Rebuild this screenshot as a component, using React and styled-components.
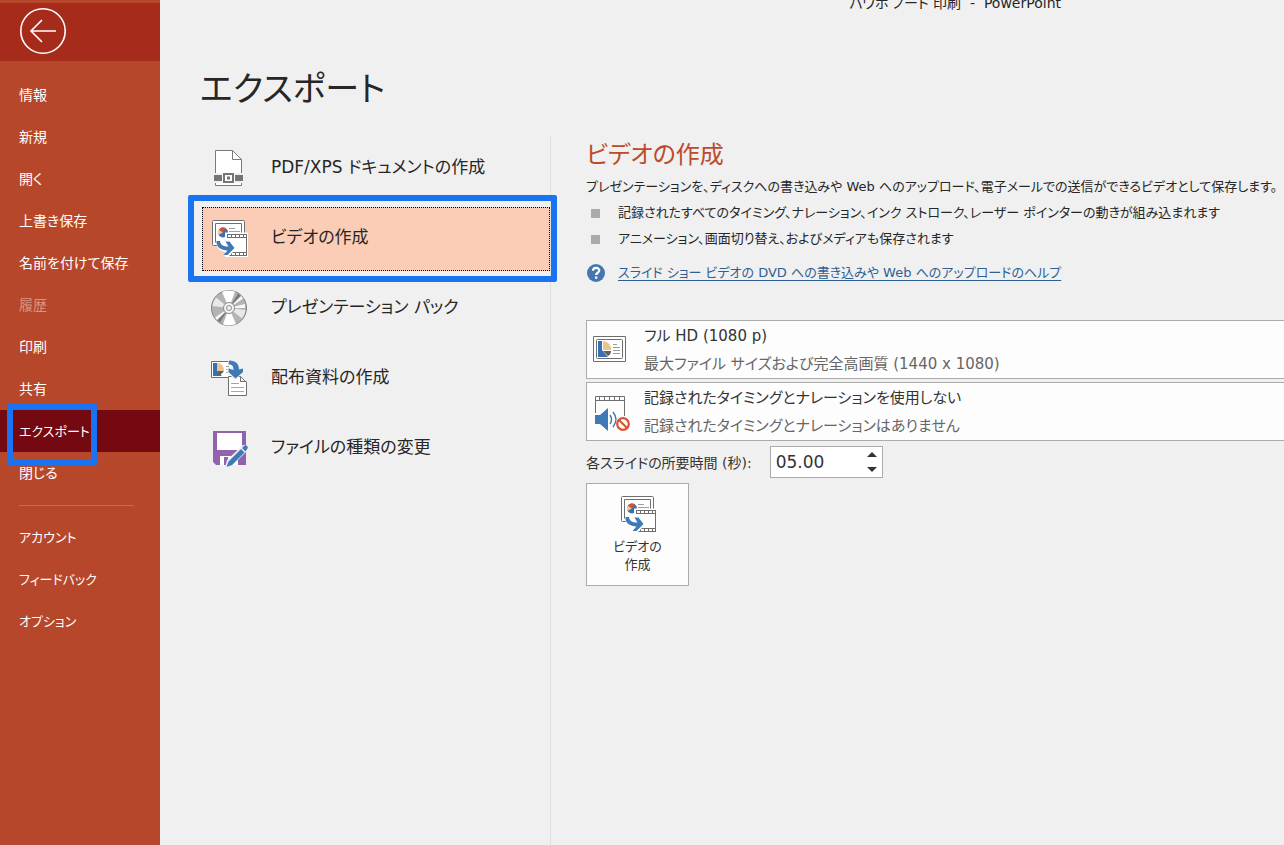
import * as React from 'react';
import styled, { createGlobalStyle } from 'styled-components';

const GlobalStyle = createGlobalStyle`
    * {
        box-sizing: border-box;
    }
    body {
        margin: 0;
        background: #f0f0f0;
        color: #262626;
        font-family: "DejaVu Sans", "Noto Sans CJK JP", sans-serif;
        font-size: 13px;
        font-feature-settings: "palt";
    }
    button, input {
        font: inherit;
        color: inherit;
        font-feature-settings: inherit;
    }
`

const menuItems = [
    { label: '情報' },
    { label: '新規' },
    { label: '開く' },
    { label: '上書き保存' },
    { label: '名前を付けて保存' },
    { label: '履歴', disabled: true },
    { label: '印刷' },
    { label: '共有' },
    { label: 'エクスポート', active: true, compact: true },
    { label: '閉じる' },
];

const footerItems = [
    { label: 'アカウント', compact: true },
    { label: 'フィードバック', compact: true },
    { label: 'オプション', compact: true },
];

const BackIcon = () => (
    <svg width="48" height="48" viewBox="0 0 48 48" fill="none" stroke="#fff" strokeWidth="1.6">
        <circle cx="24" cy="24" r="22.2" />
        <path d="M37 24H12M23 13L12 24l11 11" />
    </svg>
)

const PdfIcon = () => (
    <svg width="38" height="38" viewBox="0 0 38 38">
        <path d="M5.5.5h17l9 9v26h-26z" fill="#fff" stroke="#7a7a7a" />
        <path d="M22.5.5v9h9" fill="none" stroke="#7a7a7a" />
        <path d="M3 23h31v10H3z" fill="#f0f0f0" />
        <path d="M4 25h8v6H4zM25 25h8v6h-8z" fill="#757575" />
        <path d="M12 22h13v12H12z" fill="#fff" />
        <path d="M14 24h9v8h-9z" fill="none" stroke="#757575" strokeWidth="2" />
        <path d="M17 26.5h3v3h-3z" fill="#757575" />
    </svg>
)

const VideoIcon = () => (
    <svg width="38" height="38" viewBox="0 0 38 38">
        <rect x="2.5" y=".5" width="32" height="25" rx="1" fill="#fff" stroke="#6e6e6e" />
        <path d="M5.5 22.5v-19h26v12" fill="none" stroke="#6e6e6e" />
        <path d="M19 8.5h6M19 11.5h11" stroke="#a0a0a0" />
        <circle cx="13" cy="12.5" r="5" fill="#3a70ae" />
        <path d="M13 12.5L8.5 15A5 5 0 0 1 9 9.5z" fill="#f4c39b" />
        <path d="M13 12.5L9 9.5A5 5 0 0 1 16 8.5z" fill="#cf5335" />
        <path d="M15 12.5h23V37H15z" fill="#fff" />
        <path d="M17 14.5h19.5M17 17.5h19.5M17 32.5h19.5M17 35.5h19.5M17.5 14v4M36.5 14v22M17.5 32v4" stroke="#6e6e6e" />
        <path d="M19 16h17M19 34h17" stroke="#6e6e6e" strokeWidth="3" strokeDasharray="1 3" strokeDashoffset="-2" />
        <path d="M6 20h5c0 4 2 5 6 5l-1-4h5l6 7-8 8h-5l3-4C10 32 6 28 6 20z" fill="#fff" />
        <path d="M6.5 21H10c.5 4 3 5.5 8.5 5.5l-3-5h4l5 6.5-7 7h-4l4-4.5C11 30.5 6 27 6.5 21z" fill="#3f7ab8" />
    </svg>
)

const DiscIcon = () => (
    <svg width="38" height="38" viewBox="0 0 38 38">
        <circle cx="19" cy="18" r="17.5" fill="#b4b4b4" stroke="#808080" />
        <path d="M19 18L12 2a17 17 0 0 1 13-.2zM19 18L26 34a17 17 0 0 1-13 .2z" fill="#fff" />
        <path d="M19 18L2.5 16A17 17 0 0 1 6 7.5zM19 18l16.5 2A17 17 0 0 1 32 28.5z" fill="#e9e9e9" />
        <path d="M19 18L28 3.5l3 2.5zM19 18l-9 14.5L7 30z" fill="#7c7c7c" />
        <path d="M19 18L31 6l2 2.5zM19 18L7 30l-2-2.5zM19 18l16-4v4z" fill="#f8f8f8" />
        <circle cx="19" cy="18" r="5.5" fill="#f4f4f4" stroke="#8c8c8c" />
        <circle cx="19" cy="18" r="2.5" fill="#f0f0f0" stroke="#8c8c8c" />
    </svg>
)

const HandoutIcon = () => (
    <svg width="38" height="38" viewBox="0 0 38 38">
        <path d="M1.5 1.5h23v16h-23z" fill="#fff" stroke="#6e6e6e" />
        <path d="M3 3h4v8l5 5H3z" fill="#3a70ae" />
        <path d="M7 3a7 7 0 0 1 7 8H7z" fill="#ecc48b" />
        <path d="M7 11h7l-4 4.5z" fill="#5f5f5f" />
        <path d="M16 6.5h3M16 9.5h3M16 12.5h3" stroke="#9a9a9a" />
        <path d="M18.5 16.5h12l6 6v13h-18z" fill="#fff" stroke="#6e6e6e" />
        <path d="M30.5 16.5v5h6" fill="none" stroke="#6e6e6e" />
        <path d="M21 23.5h8M21 27.5h13M21 31.5h13" stroke="#a6a6a6" />
        <path d="M18 0h5c5 1 8 4 8 8h3v4l-9 8-8-8V7h5c0-2-1-3-4-3z" fill="#f0f0f0" />
        <path d="M19 .5c7 0 10 3.5 10 9l4-1V12l-7.500 6.500-7-6.500V8.500l5 1.500c0-4-1-5.500-5-5.500z" fill="#3f7ab8" />
    </svg>
)

const SaveAsIcon = () => (
    <svg width="38" height="38" viewBox="0 0 38 38">
        <path d="M3 1h33v34H6l-3-3z" fill="#9163ae" />
        <path d="M7 3h25v17H7z" fill="#fff" />
        <path d="M10 26h18v9H10z" fill="#fff" />
        <path d="M14 27h4v8h-4z" fill="#9163ae" />
        <path d="M15 38l2-8 16-15h5v5L22 36z" fill="#f0f0f0" />
        <path d="M16.5 37l2-5.5L31 19l3.5 3.5L22 35zM32 18l2.5-2.5c2-1 4 1 3 3L35.5 21.5z" fill="#3f7ab8" />
    </svg>
)

const SlideIcon = () => (
    <svg width="38" height="38" viewBox="0 0 38 38">
        <path d="M1.5 5.5h32v25h-32z" fill="#fff" stroke="#6e6e6e" />
        <rect x="4.5" y="8.5" width="26" height="19" rx="1" fill="#fff" stroke="#6e6e6e" />
        <path d="M6 10h4v9l6 7H6z" fill="#3a70ae" />
        <path d="M11 10a8 8 0 0 1 8 9h-8z" fill="#ecc48b" />
        <path d="M11 20h8c0 2-1 4-3 5z" fill="#5f5f5f" />
        <path d="M21 13.5h4M21 16.5h7M21 19.5h7M21 22.5h7" stroke="#9a9a9a" />
    </svg>
)

const MutedFilmIcon = () => (
    <svg width="38" height="38" viewBox="0 0 38 38">
        <path d="M3.5 20V3.5h29V23M3.5 7.5h29" fill="none" stroke="#6e6e6e" />
        <path d="M7 5.5h24" stroke="#6e6e6e" strokeWidth="4" strokeDasharray="1 4" />
        <path d="M3 22h5l8-7v23l-8-7H3z" fill="#3f7ab8" />
        <path d="M18 22c2 3 2 6 0 9M21 19c4 5 4 10 0 15" fill="none" stroke="#3f7ab8" strokeWidth="1.5" />
        <circle cx="31" cy="31" r="5.8" fill="#fff" stroke="#d65532" strokeWidth="2.2" />
        <path d="M27 27l8 8" stroke="#d65532" strokeWidth="2.2" />
    </svg>
)

const HelpIcon = () => (
    <svg width="20" height="20" viewBox="0 0 20 20">
        <circle cx="10" cy="10" r="9" fill="#4576b0" />
        <path d="M7 7.8C7 4 13.3 4 13.3 7.5c0 2.2-3.2 2.3-3.2 4.5" fill="none" stroke="#fff" strokeWidth="2.2" />
        <path d="M9 13.5h2.3v2.3H9z" fill="#fff" />
    </svg>
)

const exportItems = [
    { label: 'PDF/XPS ドキュメントの作成', icon: <PdfIcon /> },
    { label: 'ビデオの作成', icon: <VideoIcon />, selected: true },
    { label: 'プレゼンテーション パック', icon: <DiscIcon /> },
    { label: '配布資料の作成', icon: <HandoutIcon /> },
    { label: 'ファイルの種類の変更', icon: <SaveAsIcon /> },
];

const settings = [
    {
        title: 'フル HD (1080 p)',
        note: '最大ファイル サイズおよび完全高画質 (1440 x 1080)',
        icon: <SlideIcon />,
    },
    {
        title: '記録されたタイミングとナレーションを使用しない',
        note: '記録されたタイミングとナレーションはありません',
        icon: <MutedFilmIcon />,
    },
];

const Menu = ({ items }) => (
    <MenuList>
        {items.map((item) => (
            <li key={item.label}>
                <MenuButton $active={item.active} $compact={item.compact} disabled={item.disabled}>
                    {item.label}
                    {item.active && <MenuMarker />}
                </MenuButton>
            </li>
        ))}
    </MenuList>
)

const App = () => {
    const [seconds, setSeconds] = React.useState('05.00');
    const step = (amount) => {
        const next = Math.max(0, (parseFloat(seconds) || 0) + amount);
        setSeconds(next.toFixed(2).padStart(5, '0'));
    };

    return (
        <Page>
            <GlobalStyle />
            <Sidebar>
                <BackBar>
                    <BackButton aria-label="戻る"><BackIcon /></BackButton>
                </BackBar>
                <Menu items={menuItems} />
                <Divider />
                <Menu items={footerItems} />
            </Sidebar>
            <Main>
                <TitleBar>パワポ ノート 印刷&nbsp; -&nbsp; PowerPoint</TitleBar>
                <Heading>エクスポート</Heading>
                <Columns>
                    <ExportList>
                        {exportItems.map((item) => (
                            <li key={item.label}>
                                <ExportButton $selected={item.selected}>
                                    {item.icon}
                                    <ExportLabel>{item.label}</ExportLabel>
                                    {item.selected && <ExportMarker />}
                                </ExportButton>
                            </li>
                        ))}
                    </ExportList>
                    <Detail>
                        <DetailTitle>ビデオの作成</DetailTitle>
                        <Lead>プレゼンテーションを、ディスクへの書き込みや Web へのアップロード、電子メールでの送信ができるビデオとして保存します。</Lead>
                        <Points>
                            <li>記録されたすべてのタイミング、ナレーション、インク ストローク、レーザー ポインターの動きが組み込まれます</li>
                            <li>アニメーション、画面切り替え、およびメディアも保存されます</li>
                        </Points>
                        <Help>
                            <HelpIcon />
                            <a href="#help">スライド ショー ビデオの DVD への書き込みや Web へのアップロードのヘルプ</a>
                        </Help>
                        <Settings>
                            {settings.map((item) => (
                                <SettingButton key={item.title} aria-haspopup="listbox">
                                    {item.icon}
                                    <span>
                                        <SettingTitle>{item.title}</SettingTitle>
                                        <SettingNote>{item.note}</SettingNote>
                                    </span>
                                </SettingButton>
                            ))}
                        </Settings>
                        <Duration>
                            <label htmlFor="seconds">各スライドの所要時間 (秒):</label>
                            <Spinner>
                                <input id="seconds" value={seconds} onChange={(e) => setSeconds(e.target.value)} />
                                <SpinnerButtons>
                                    <button aria-label="増やす" onClick={() => step(1)}>
                                        <svg width="10" height="5" viewBox="0 0 10 5"><path d="M5 0l5 5H0z" fill="#333" /></svg>
                                    </button>
                                    <button aria-label="減らす" onClick={() => step(-1)}>
                                        <svg width="10" height="5" viewBox="0 0 10 5"><path d="M0 0h10L5 5z" fill="#333" /></svg>
                                    </button>
                                </SpinnerButtons>
                            </Spinner>
                        </Duration>
                        <CreateButton>
                            <VideoIcon />
                            <span>ビデオの<br />作成</span>
                        </CreateButton>
                    </Detail>
                </Columns>
            </Main>
        </Page>
    )
}
export default App;

const Page = styled.div`
    display: flex;
    min-height: 100vh;
`

const Sidebar = styled.nav`
    flex: 0 0 160px;
    border-top: 3px solid #b7472a;
    background: #b7472a;
`

const BackBar = styled.div`
    display: flex;
    align-items: center;
    height: 58px;
    margin-bottom: 13px;
    padding: 0 19px 2px;
    background: #a62b1a;
`

const BackButton = styled.button`
    display: flex;
    padding: 0;
    border: 0;
    background: none;
`

const MenuList = styled.ul`
    margin: 0;
    padding: 0;
    list-style: none;
`

const MenuButton = styled.button`
    position: relative;
    display: flex;
    align-items: center;
    width: 100%;
    height: 42px;
    padding: 0 19px 2px;
    border: 0;
    background: ${props => props.$active ? '#750912' : 'none'};
    color: #fff;
    font-size: ${props => props.$compact ? '13px' : '14px'};
    white-space: nowrap;
    &:disabled {
        color: #d9937f;
    }
`

const Marker = styled.span`
    position: absolute;
    border: 6px solid #1a73f0;
    border-radius: 2px;
    pointer-events: none;
`

const MenuMarker = styled(Marker)`
    z-index: 1;
    top: -7px;
    left: 7px;
    width: 90px;
    height: 62px;
`

const Divider = styled.hr`
    height: 1px;
    margin: 11px 26px 10px 19px;
    border: 0;
    background: #d0664a;
`

const Main = styled.main`
    display: flex;
    flex: 1;
    flex-direction: column;
    min-width: 0;
`

const TitleBar = styled.div`
    height: 14px;
    padding-right: 223px;
    font-size: 14px;
    line-height: 6px;
    text-align: right;
    white-space: nowrap;
`

const Heading = styled.h1`
    margin: 47px 0 19px 40px;
    font-size: 34px;
    font-weight: 400;
    line-height: 56px;
`

const Columns = styled.div`
    display: flex;
    flex: 1;
    padding-left: 42px;
`

const ExportList = styled.ul`
    display: flex;
    flex: 0 0 349px;
    flex-direction: column;
    gap: 6px;
    margin: 0;
    padding: 1px 0 0;
    border-right: 1px solid #e0e0e0;
    list-style: none;
`

const ExportButton = styled.button`
    position: relative;
    display: flex;
    align-items: center;
    gap: 23px;
    width: 100%;
    height: 64px;
    padding: 0 7px;
    border: 1px ${props => props.$selected ? 'dotted #000' : 'solid transparent'};
    background: ${props => props.$selected ? '#fccdb6' : 'none'};
    font-size: 17px;
    line-height: 24px;
    white-space: nowrap;
`

const ExportLabel = styled.span`
    padding-bottom: 5px;
`

const ExportMarker = styled(Marker)`
    inset: -13px -8px -12px -15px;
`

const Detail = styled.section`
    flex: 1;
    min-width: 0;
    padding-left: 35px;
    white-space: nowrap;
`

const DetailTitle = styled.h2`
    margin: 0;
    color: #bc4b2c;
    font-size: 24px;
    font-weight: 400;
    line-height: 38px;
`

const Lead = styled.p`
    margin: 0;
    line-height: 26px;
`

const Points = styled.ul`
    margin: 0;
    padding: 0;
    line-height: 26px;
    list-style: none;
    li {
        display: flex;
        align-items: center;
        gap: 18px;
        padding-left: 5px;
    }
    li::before {
        content: "";
        flex: none;
        width: 9px;
        height: 9px;
        background: #ababab;
    }
`

const Help = styled.p`
    display: flex;
    align-items: center;
    gap: 12px;
    margin: 8px 0 34px;
    line-height: 26px;
    a {
        color: #2f5f92;
        text-underline-offset: 3px;
    }
`

const Settings = styled.div`
    display: flex;
    flex-direction: column;
    gap: 3px;
`

const SettingButton = styled.button`
    display: flex;
    align-items: center;
    gap: 14px;
    height: 59px;
    padding: 0 5px;
    border: 1px solid #ababab;
    border-right: 0;
    background: #fdfdfd;
    font-size: 15px;
    line-height: 28px;
    text-align: left;
`

const SettingTitle = styled.span`
    display: block;
    color: #333;
`

const SettingNote = styled.span`
    display: block;
    color: #666;
`

const Duration = styled.div`
    display: flex;
    align-items: center;
    gap: 18px;
    margin: 5px 0;
    color: #333;
    font-size: 14px;
`

const Spinner = styled.div`
    display: flex;
    width: 113px;
    height: 32px;
    border: 1px solid #ababab;
    background: #fff;
    input {
        flex: 1;
        min-width: 0;
        padding: 0 5px;
        border: 0;
        background: none;
        font-size: 17px;
    }
`

const SpinnerButtons = styled.div`
    display: flex;
    flex: 0 0 20px;
    flex-direction: column;
    button {
        display: flex;
        flex: 1;
        align-items: center;
        justify-content: center;
        padding: 0;
        border: 0;
        background: none;
    }
`

const CreateButton = styled.button`
    display: flex;
    flex-direction: column;
    align-items: center;
    gap: 4px;
    width: 103px;
    height: 103px;
    padding: 12px 0 0;
    border: 1px solid #ababab;
    background: #fdfdfd;
    color: #333;
    line-height: 18px;
`
